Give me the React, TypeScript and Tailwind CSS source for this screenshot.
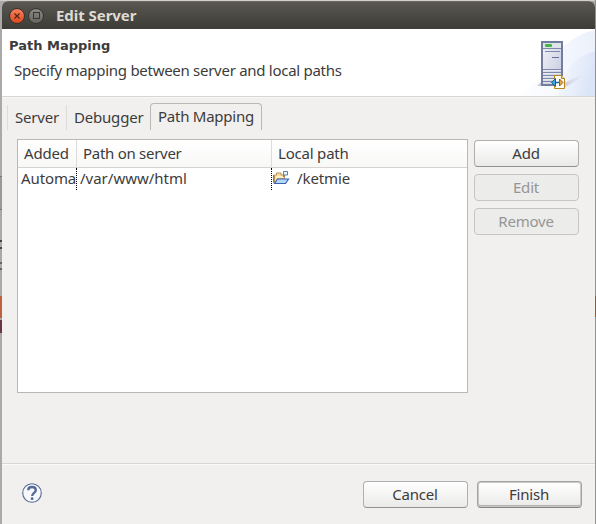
import React from "react";

function ServerIcon() {
  return (
    <svg width="84" height="67" viewBox="0 0 84 67" className="block">
      <defs>
        <linearGradient id="sky" x1="0" y1="0" x2="1" y2="0">
          <stop offset="0" stopColor="#fff" />
          <stop offset="0.5" stopColor="#f6f9fe" />
          <stop offset="1" stopColor="#ebf0fb" />
        </linearGradient>
        <linearGradient id="arc" x1="0" y1="0" x2="1" y2="0.3">
          <stop offset="0" stopColor="#f2f6fd" stopOpacity="0.3" />
          <stop offset="1" stopColor="#dbe5f8" />
        </linearGradient>
        <linearGradient id="tower" x1="0" y1="0" x2="1" y2="1">
          <stop offset="0" stopColor="#f2f3f8" />
          <stop offset="1" stopColor="#c2c8dc" />
        </linearGradient>
        <linearGradient id="shade" x1="0" y1="0" x2="1" y2="0">
          <stop offset="0" stopColor="#cbc7d6" />
          <stop offset="1" stopColor="#e2e2ee" stopOpacity="0" />
        </linearGradient>
      </defs>
      <path d="M84 1C64 6 50 16 38 36C30 50 18 60 4 67H84Z" fill="url(#sky)" />
      <path d="M84 22C66 27 53 38 47 67H84Z" fill="url(#arc)" />
      <path d="M53 54L74 44L67 51L54 58Z" fill="url(#shade)" />
      <path d="M26 57L30 53V57Z" fill="#c8cad5" />
      <rect x="31" y="13" width="20" height="43" fill="url(#tower)" stroke="#727c9f" strokeWidth="2" />
      <path d="M32 14H50V19H32Z" fill="#dfe5e6" />
      <rect x="34" y="15" width="7" height="3" rx="1" fill="#46b548" />
      <path d="M32 19.5H50M34 22.5H49M32 40.5H50M32 43.5H50M32 46.5H50M32 49.5H50M32 52.5H50" stroke="#7f88aa" />
      <path d="M32 41.5H50M32 44.5H50M32 47.5H50M32 50.5H50" stroke="#e8eaf3" />
      <path d="M41 28.5H48" stroke="#666f99" />
      <path d="M43.5 46.5H50.5L53.5 49.5V59.5H43.5Z" fill="#fffdf2" stroke="#b48620" />
      <path d="M50.5 46.5V49.5H53.5" fill="#f3dda0" stroke="#b48620" />
      <path d="M44 53.5H49" stroke="#1769a5" strokeWidth="1.3" />
      <path d="M40.5 53.5L44.5 49.5V57.5Z" fill="#41a7dd" stroke="#145c93" />
      <path d="M52 53.5L48.5 50V57Z" fill="#e7a64a" stroke="#9b611d" />
    </svg>
  );
}

function FolderIcon() {
  return (
    <svg width="17" height="17" viewBox="0 0 17 17" className="-mt-[2px] block shrink-0">
      <path d="M1.5 13.5V6H3.5V4H8V6H11.5V10H5L2 14Z" fill="#f9df9c" stroke="#b5915c" />
      <path d="M3 7H11V9H3Z" fill="#ffefbd" />
      <path d="M1.5 14.5L4.5 10H15.5L12.5 14.5Z" fill="#b3d9f8" stroke="#3e5fb5" strokeWidth="1.2" />
      <path d="M0.5 6V13L1.5 14.5" fill="none" stroke="#6a79b6" />
      <path d="M10.5 8V2.5H14.5V6H11" fill="#eef5fc" stroke="#5683ae" />
    </svg>
  );
}

function Button({ children, kind = "normal" }: { children: React.ReactNode; kind?: "normal" | "disabled" | "default" }) {
  const look = {
    normal: "border border-[#b0afad] border-b-[#94928f] bg-linear-to-b from-white to-[#eaeae9] text-[#3c3c3c]",
    disabled: "border border-[#c6c5c3] bg-[#ececeb] text-[#969594]",
    default: "border border-[#a4a3a1] border-b-[#858482] bg-linear-to-b from-white to-[#eaeae9] text-[#3c3c3c] shadow-[inset_0_0_0_1px_#c9c8c6,inset_0_-2px_0_#b3b2b0]",
  }[kind];
  return <button className={`flex h-[27px] w-[105px] items-center justify-center rounded-[4px] pb-[2px] pr-px text-[15px] leading-5 tracking-[-0.2px] ${look}`}>{children}</button>;
}

export default function App() {
  return (
    <div className="relative h-[524px] w-[596px] overflow-hidden bg-[#aaa9a8] pl-[2px] pr-px pt-px font-['Noto_Sans','Open_Sans',sans-serif] text-[15px] leading-5 text-[#3c3c3c]">
      <div className="absolute left-0 top-0 h-px w-full bg-[#d0cfcd]" />
      <div className="absolute left-0 top-[176px] h-[34px] w-[2px] border-y border-[#777] bg-[#999]" />
      <div className="absolute left-0 top-[240px] h-[9px] w-[2px] border-y-2 border-[#444]" />
      <div className="absolute left-0 top-[262px] h-[8px] w-[2px] border-y-2 border-[#596775]" />
      <div className="absolute left-0 top-[296px] h-[22px] w-[2px] bg-[#bf603f]" />
      <div className="absolute left-0 top-[320px] h-[13px] w-[2px] bg-[#6b3548]" />
      <div className="absolute right-0 top-0 h-full w-px bg-[#929190]" />
      <div className="absolute right-0 top-[296px] h-[21px] w-px bg-[#ad4d32]" />

      <main className="relative flex h-[523px] w-[593px] flex-col overflow-hidden rounded-t-[6px] bg-[#f1f0ee]">
        <header className="flex h-7 shrink-0 items-center border-t border-[#6b6961] bg-linear-to-b from-[#595750] to-[#3d3c37] pl-[7px]">
          <span className="flex size-4 items-center justify-center rounded-full border border-[#37332d] bg-linear-to-b from-[#f58059] to-[#dc481e]">
            <svg width="8" height="8" viewBox="0 0 8 8"><path d="M1.5 1.5L6.5 6.5M6.5 1.5L1.5 6.5" stroke="#572414" strokeWidth="1.2" /></svg>
          </span>
          <span className="ml-[3px] flex size-4 items-center justify-center rounded-full border border-[#383630] bg-linear-to-b from-[#8b8982] to-[#676560]">
            <span className="size-[7px] border border-[#37362f]" />
          </span>
          <h1 className="-mt-[2px] ml-3 text-[15px] font-bold leading-5 tracking-[-0.05px] text-[#dfdbd2]">Edit Server</h1>
        </header>

        <section className="flex h-[67px] shrink-0 justify-between bg-white">
          <div className="pt-[7px]">
            <h2 className="pl-[7px] font-['DejaVu_Sans',sans-serif] text-[13px] font-bold">Path Mapping</h2>
            <p className="mt-1 pl-3 tracking-[-0.28px]">Specify mapping between server and local paths</p>
          </div>
          <ServerIcon />
        </section>
        <div className="h-[2px] shrink-0 border-t border-[#d6d5d2] bg-[#f8f8f7]" />

        <nav className="mt-[5px] flex h-[27px] shrink-0 items-end pl-[5px] tracking-[-0.2px]">
          <div className="h-[25px] w-[59px] border-l border-[#dddcda] pl-[7px] pt-[2px]">Server</div>
          <div className="h-[25px] w-[84px] border-l border-[#dddcda] pl-[7px] pt-[2px]">Debugger</div>
          <div className="h-[27px] w-[112px] rounded-t-[4px] border border-b-0 border-[#bab9b6] pl-[7px] pt-[2px] tracking-[-0.25px]">Path Mapping</div>
        </nav>

        <section className="mt-[9px] flex gap-[6px] pl-[15px]">
          <div className="flex h-[254px] w-[451px] flex-col border border-[#b9b8b5] bg-white">
            <div className="flex h-7 shrink-0 items-center border-b border-[#d5d4d2] bg-linear-to-b from-white to-[#f8f8f7] tracking-[-0.2px]">
              <div className="flex h-full w-[59px] items-center border-r border-[#dddcda] pb-[2px] pl-[6px]">Added</div>
              <div className="flex h-full w-[195px] items-center border-r border-[#dddcda] pb-[2px] pl-[6px] tracking-[-0.28px]">Path on server</div>
              <div className="pb-[2px] pl-[6px]">Local path</div>
            </div>
            <div className="flex h-[22px] items-start">
              <div className="h-[22px] w-[59px] overflow-hidden whitespace-nowrap border-r border-dotted border-black pl-[3px] tracking-[-0.1px]">Automa</div>
              <div className="h-[22px] w-[195px] border-r border-dotted border-black pl-[3px]">/var/www/html</div>
              <div className="flex h-5 items-center pl-px"><FolderIcon /><span className="pl-[7px] tracking-[-0.1px]">/ketmie</span></div>
            </div>
          </div>
          <div className="flex flex-col gap-[7px] pt-px">
            <Button>Add</Button>
            <Button kind="disabled">Edit</Button>
            <Button kind="disabled">Remove</Button>
          </div>
        </section>

        <footer className="mt-auto flex h-[61px] shrink-0 items-start border-t border-[#d7d6d4] pl-5 pt-[17px] shadow-[inset_0_1px_0_#fafafa]">
          <svg width="20" height="20" viewBox="0 0 20 20" className="mt-[2px]">
            <circle cx="10" cy="10" r="9.3" fill="#f7f8fb" stroke="#576a96" strokeWidth="1.1" />
            <path d="M6.2 7.2C6.2 4.9 7.8 4 10 4C12.5 4 13.8 5.3 13.8 7.2C13.8 10 10.2 9.8 10.2 13" fill="none" stroke="#536894" strokeWidth="2.3" />
            <circle cx="10.1" cy="15.7" r="1.4" fill="#536894" />
          </svg>
          <div className="ml-auto flex gap-[9px] pr-[13px]">
            <Button>Cancel</Button>
            <Button kind="default">Finish</Button>
          </div>
        </footer>
      </main>
    </div>
  );
}
